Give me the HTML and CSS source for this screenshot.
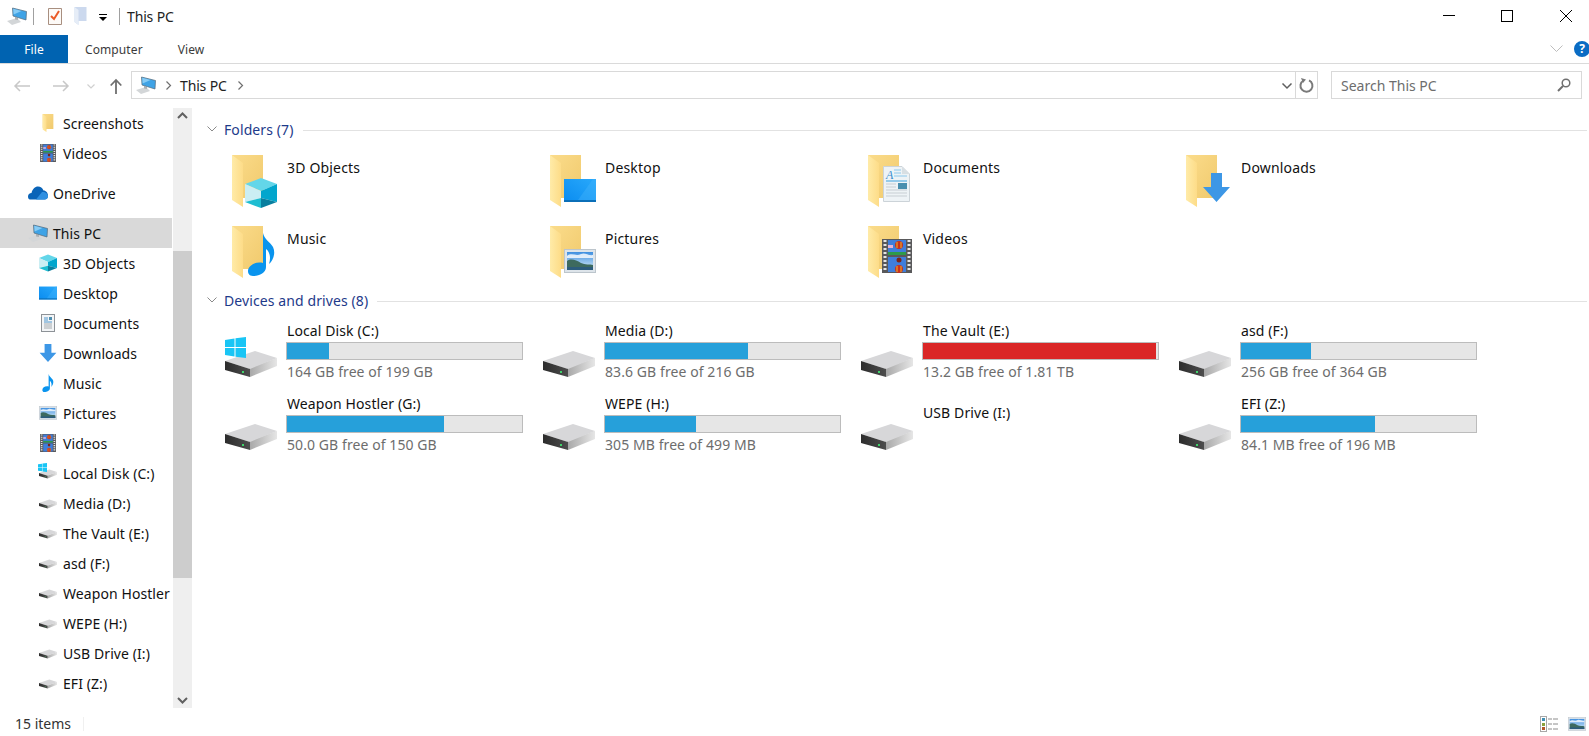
FILE: index.html
```html
<!DOCTYPE html>
<html lang="en">
<head>
<meta charset="utf-8">
<title>This PC</title>
<link rel="stylesheet" href="styles.css">
</head>
<body>
<svg class="defs" aria-hidden="true">
  <defs>
    <linearGradient id="gFlap" x1="0" y1="0" x2="1" y2="0"><stop offset="0" stop-color="#ffeba8"/><stop offset="1" stop-color="#fddc88"/></linearGradient>
    <linearGradient id="gBack" x1="0" y1="0" x2="1" y2="1"><stop offset="0" stop-color="#fbdc8b"/><stop offset="1" stop-color="#f0c96c"/></linearGradient>
    <linearGradient id="gDesk" x1="0" y1="1" x2="1" y2="0"><stop offset="0" stop-color="#0a8cf0"/><stop offset="1" stop-color="#29a9fb"/></linearGradient>
    <linearGradient id="gSky" x1="0" y1="0" x2="0" y2="1"><stop offset="0" stop-color="#3f8fe0"/><stop offset="1" stop-color="#d9edf7"/></linearGradient>
    <linearGradient id="gDrive" x1="0" y1="0" x2="1" y2="0"><stop offset="0" stop-color="#a6a6a6"/><stop offset="1" stop-color="#e6e6e6"/></linearGradient>
    <linearGradient id="gDark" x1="0" y1="0" x2="1" y2="0"><stop offset="0" stop-color="#2c2c2c"/><stop offset="1" stop-color="#4d4d4d"/></linearGradient>
    <symbol id="folder" viewBox="0 0 31 52">
      <path fill="url(#gBack)" d="M0 0H31V43H11V46L0 40Z"/>
      <path fill="#fff" d="M11 43H16V49L11 48Z"/>
      <path fill="url(#gFlap)" d="M0 0L11 8V52L0 45Z"/>
    </symbol>
    <symbol id="cube" viewBox="0 0 32 30">
      <path fill="#63d6e9" d="M0 6L16 0L32 6L16 13Z"/>
      <path fill="#cbeef3" d="M0 6L16 13V20L0 24Z"/>
      <path fill="#02a6cd" d="M32 6L16 13V20L32 24Z"/>
      <path fill="#1ebdd1" d="M0 24L16 20V30Z"/>
      <path fill="#097f9f" d="M32 24L16 20V30Z"/>
    </symbol>
    <symbol id="desk" viewBox="0 0 32 23">
      <rect width="32" height="23" fill="url(#gDesk)"/>
      <rect y="21" width="32" height="2" fill="#0b6fb8"/>
      <path fill="#4ab8fb" d="M14 21L29 0H32V21Z" opacity=".35"/>
    </symbol>
    <symbol id="doc" viewBox="0 0 27 36">
      <path fill="#eef3f6" stroke="#ccd3d8" d="M.5.5H19L26.5 8V35.5H.5Z"/>
      <path fill="#d8dfe3" d="M19 .5V8H26.5Z"/>
      <text class="docA" x="3" y="13">A</text>
      <path stroke="#8cc8ec" d="M11 4H18M11 7H18M11 10H24"/>
      <path stroke="#3da2de" d="M3 15H24"/>
      <rect x="15" y="17" width="9" height="6" fill="#4a8fae"/>
      <path stroke="#c7ced3" d="M3 18H13M3 21H13M3 24H24M3 27H24M3 30H24"/>
    </symbol>
    <symbol id="arrow" viewBox="0 0 27 29">
      <path fill="#3d97e6" d="M8 0H19V14H27L13.500 29L0 14H8Z"/>
    </symbol>
    <symbol id="note" viewBox="0 0 27 43">
      <path fill="#0a94ee" d="M15 0C16 6 22 9 25 14C28 20 25 28 21 31C23 25 22 19 18 16V34C18 40 11 43 5 43C1 43 0 40 0 38C0 33 7 28 15 30Z"/>
    </symbol>
    <symbol id="pic" viewBox="0 0 32 24">
      <rect x=".5" y=".5" width="31" height="23" fill="#dde4ea" stroke="#bcc5cc"/>
      <rect x="3" y="3" width="26" height="18" fill="url(#gSky)"/>
      <path fill="#fff" opacity=".8" d="M3 7C8 3 12 8 17 5C21 3 24 7 29 6V9H3Z"/>
      <path fill="#3d6a5e" d="M3 12C7 9 12 11 17 14C21 16 26 15 29 16V21H3Z"/>
      <path fill="#2c5c7c" d="M3 18H29V21H3Z"/>
    </symbol>
    <symbol id="film" viewBox="0 0 30 34">
      <rect width="30" height="34" fill="#59595b"/>
      <path stroke="#e5e5e5" stroke-width="3" stroke-dasharray="2 2" d="M3 1V33M27 1V33"/>
      <rect x="6" y="1" width="18" height="15" fill="#3f7edc"/>
      <rect x="6" y="18" width="18" height="15" fill="#3f7edc"/>
      <path fill="#2e9a4a" d="M6 13H24V16H6Z"/>
      <path fill="#e8b2d4" d="M6 6H11V9H6Z"/>
      <circle cx="17" cy="6" r="4" fill="#c8301e"/>
      <path stroke="#e9b82c" d="M15 3V9M19 3V9"/>
      <circle cx="17" cy="21" r="2.500" fill="#7a241a"/>
      <circle cx="17" cy="30" r="4" fill="#c8301e"/>
      <path stroke="#e9b82c" d="M15 27V33M19 27V33"/>
    </symbol>
    <symbol id="drive" viewBox="0 0 52 26">
      <path fill="url(#gDrive)" d="M24 17L52 7V15L25 26Z"/>
      <path fill="#d7d7d9" d="M0 10L30 0L52 7L25 18Z"/>
      <path fill="url(#gDark)" d="M0 10L25 18V26L0 19Z"/>
      <rect x="17" y="20" width="2" height="2" fill="#3fd36a"/>
    </symbol>
    <symbol id="win" viewBox="0 0 21 21">
      <path fill="#19c5f5" d="M0 3L9.500 1.500V10H0ZM10.500 1.300L21 0V10H10.500ZM0 11H9.500V19.500L0 18ZM10.500 11H21V21L10.500 19.700Z"/>
    </symbol>
    <symbol id="pc" viewBox="0 0 20 18">
      <path fill="#d3d6d8" d="M0 14L10 11L14 15L5 18Z"/>
      <path fill="#aeb2b5" d="M8 10L11 11V13L8 12.500Z"/>
      <path fill="#3fa3e6" stroke="#566a7a" stroke-width=".7" d="M5.500 1L19.500 4.500L19 13L6 9Z"/>
      <path fill="#86cbf5" d="M6.200 1.800L14.500 3.900L6.600 7.500Z"/>
    </symbol>
    <symbol id="sdoc" viewBox="0 0 14 18">
      <rect x=".5" y=".5" width="13" height="17" fill="#f3f5f7" stroke="#8d9297"/>
      <path stroke="#4f96cc" d="M3 4H7M3 6H7M3 8H11"/>
      <rect x="8" y="3" width="3" height="3" fill="#4f8fb0"/>
      <path stroke="#a5abaf" d="M3 10H11M3 12H11M3 14H11"/>
    </symbol>
  </defs>
</svg>

<div class="app">
  <header class="titlebar">
    <svg class="q-pc"><use href="#pc"/></svg>
    <span class="q-sep"></span>
    <svg class="q-check" viewBox="0 0 14 18"><path fill="#fdfaf7" stroke="#a88f80" d="M.5 1.500H13.500V17.500H.5Z"/><path fill="none" stroke="#ea5a26" stroke-width="2" d="M3 9L6 12L11 4"/></svg>
    <svg class="q-fold" viewBox="0 0 12 18"><path fill="#ccd9ee" d="M0 0H12V14H4V18L0 15Z"/><path fill="#e6edf7" d="M0 0L4 3V18L0 15Z"/></svg>
    <svg class="q-drop" viewBox="0 0 8 7"><path d="M0 0H8V1H0ZM0 3H8L4 7Z"/></svg>
    <span class="q-sep q-sep2"></span>
    <span class="win-title">This PC</span>
    <div class="win-ctl">
      <svg class="ctl" viewBox="0 0 12 12"><path stroke="#000" d="M0 5.500H12"/></svg>
      <svg class="ctl" viewBox="0 0 12 12"><rect x=".5" y=".5" width="11" height="11" fill="none" stroke="#000"/></svg>
      <svg class="ctl ctl-close" viewBox="0 0 12 12"><path stroke="#000" d="M0 0L12 12M12 0L0 12"/></svg>
    </div>
  </header>

  <nav class="tabs">
    <span class="tab-file">File</span>
    <span class="tab tab-c">Computer</span>
    <span class="tab tab-v">View</span>
    <svg class="rib-chev" viewBox="0 0 13 8"><path fill="none" stroke="#bdbdbd" d="M.5.500L6.500 6.500L12.500.500"/></svg>
    <span class="help">?</span>
  </nav>

  <div class="navbar">
    <svg class="nv nv-back" viewBox="0 0 16 12"><path fill="none" stroke="#c8c8c8" stroke-width="1.500" d="M16 6H1M6 1L1 6L6 11"/></svg>
    <svg class="nv nv-fwd" viewBox="0 0 16 12"><path fill="none" stroke="#c8c8c8" stroke-width="1.500" d="M0 6H15M10 1L15 6L10 11"/></svg>
    <svg class="nv-small" viewBox="0 0 8 5"><path fill="none" stroke="#d0d0d0" stroke-width="1.200" d="M.5.500L4 4L7.500.500"/></svg>
    <svg class="nv-up" viewBox="0 0 12 15"><path fill="none" stroke="#6f6f6f" stroke-width="1.800" d="M6 15V1M.7 6.500L6 1L11.300 6.500"/></svg>
    <div class="addr">
      <svg class="addr-pc"><use href="#pc"/></svg>
      <svg class="crumb-chev" viewBox="0 0 5 9"><path fill="none" stroke="#6f6f6f" stroke-width="1.200" d="M.5.500L4.500 4.500L.5 8.500"/></svg>
      <span class="crumb">This PC</span>
      <svg class="crumb-chev" viewBox="0 0 5 9"><path fill="none" stroke="#6f6f6f" stroke-width="1.200" d="M.5.500L4.500 4.500L.5 8.500"/></svg>
      <svg class="addr-drop" viewBox="0 0 10 6"><path fill="none" stroke="#5f5f5f" stroke-width="1.500" d="M.5.500L5 5L9.500.500"/></svg>
      <span class="addr-refresh">
        <svg viewBox="0 0 15 15" class="refresh"><path fill="none" stroke="#7a7a7a" stroke-width="2" d="M4.500 2.500A6 6 0 1 0 10 2.300"/><path fill="#7a7a7a" d="M2 0L7 1.500L4 5Z"/></svg>
      </span>
    </div>
    <div class="search">
      <span>Search This PC</span>
      <svg class="lens" viewBox="0 0 14 14"><circle cx="9" cy="5" r="3.800" fill="none" stroke="#6f6f6f" stroke-width="1.500"/><path stroke="#6f6f6f" stroke-width="2" d="M6 8L1 13"/></svg>
    </div>
  </div>

  <div class="main">
    <aside class="tree">
      <div class="row lv2"><svg class="ti"><use href="#folder" x="2" y="0" width="14" height="18"/></svg><span>Screenshots</span></div>
      <div class="row lv2"><svg class="ti"><use href="#film"/></svg><span>Videos</span></div>
      <div class="row lv1 gap"><svg class="ti ti-wide" viewBox="0 0 20 13"><path fill="#0a64b8" d="M2 13C.5 13 0 11.500 0 10C0 8 1.500 6.500 3.500 6.500C4.500 2.500 7 0 10 0C12.500 0 14.500 1.500 15.500 4C18 4 20 6.500 20 9C20 11.500 18.500 13 16.500 13Z"/><path fill="#2f8fe0" d="M8 13L14 5.500C17 5 20 7 20 10C20 12 18.500 13 16.500 13Z"/></svg><span>OneDrive</span></div>
      <div class="row lv1 gap sel"><svg class="ti ti-wide"><use href="#pc"/></svg><span>This PC</span></div>
      <div class="row lv2"><svg class="ti"><use href="#cube"/></svg><span>3D Objects</span></div>
      <div class="row lv2"><svg class="ti"><use href="#desk"/></svg><span>Desktop</span></div>
      <div class="row lv2"><svg class="ti"><use href="#sdoc"/></svg><span>Documents</span></div>
      <div class="row lv2"><svg class="ti"><use href="#arrow"/></svg><span>Downloads</span></div>
      <div class="row lv2"><svg class="ti"><use href="#note"/></svg><span>Music</span></div>
      <div class="row lv2"><svg class="ti"><use href="#pic"/></svg><span>Pictures</span></div>
      <div class="row lv2"><svg class="ti"><use href="#film"/></svg><span>Videos</span></div>
      <div class="row lv2"><svg class="ti"><use href="#drive" y="5" width="18" height="10"/><use href="#win" x="-1" y="-1" width="9" height="9"/></svg><span>Local Disk (C:)</span></div>
      <div class="row lv2"><svg class="ti"><use href="#drive" y="5" width="18" height="10"/></svg><span>Media (D:)</span></div>
      <div class="row lv2"><svg class="ti"><use href="#drive" y="5" width="18" height="10"/></svg><span>The Vault (E:)</span></div>
      <div class="row lv2"><svg class="ti"><use href="#drive" y="5" width="18" height="10"/></svg><span>asd (F:)</span></div>
      <div class="row lv2"><svg class="ti"><use href="#drive" y="5" width="18" height="10"/></svg><span>Weapon Hostler</span></div>
      <div class="row lv2"><svg class="ti"><use href="#drive" y="5" width="18" height="10"/></svg><span>WEPE (H:)</span></div>
      <div class="row lv2"><svg class="ti"><use href="#drive" y="5" width="18" height="10"/></svg><span>USB Drive (I:)</span></div>
      <div class="row lv2"><svg class="ti"><use href="#drive" y="5" width="18" height="10"/></svg><span>EFI (Z:)</span></div>
    </aside>

    <div class="scroll">
      <svg class="sb-btn" viewBox="0 0 19 16"><path fill="none" stroke="#606060" stroke-width="2" d="M5 10L9.500 5.500L14 10"/></svg>
      <div class="sb-thumb"></div>
      <svg class="sb-btn" viewBox="0 0 19 16"><path fill="none" stroke="#606060" stroke-width="2" d="M5 6L9.500 10.500L14 6"/></svg>
    </div>

    <section class="content">
      <div class="group-head">
        <svg class="g-chev" viewBox="0 0 10 6"><path fill="none" stroke="#8a8a8a" d="M.5.500L5 5L9.500.500"/></svg>
        <span class="g-title">Folders (7)</span>
        <span class="g-rule"></span>
      </div>
      <div class="folders">
        <div class="tile"><svg class="f-ic"><use href="#folder" x="4" y="2" width="31" height="52"/><use href="#cube" x="17" y="25" width="32" height="30"/></svg><span>3D Objects</span></div>
        <div class="tile"><svg class="f-ic"><use href="#folder" x="4" y="2" width="31" height="52"/><use href="#desk" x="18" y="26" width="32" height="23"/></svg><span>Desktop</span></div>
        <div class="tile"><svg class="f-ic"><use href="#folder" x="4" y="2" width="31" height="52"/><use href="#doc" x="19" y="13" width="27" height="36"/></svg><span>Documents</span></div>
        <div class="tile"><svg class="f-ic"><use href="#folder" x="4" y="2" width="31" height="52"/><use href="#arrow" x="21" y="20" width="27" height="29"/></svg><span>Downloads</span></div>
        <div class="tile"><svg class="f-ic"><use href="#folder" x="4" y="2" width="31" height="52"/><use href="#note" x="20" y="9" width="27" height="43"/></svg><span>Music</span></div>
        <div class="tile"><svg class="f-ic"><use href="#folder" x="4" y="2" width="31" height="52"/><use href="#pic" x="18" y="25" width="32" height="24"/></svg><span>Pictures</span></div>
        <div class="tile"><svg class="f-ic"><use href="#folder" x="4" y="2" width="31" height="52"/><use href="#film" x="18" y="15" width="30" height="34"/></svg><span>Videos</span></div>
      </div>

      <div class="group-head">
        <svg class="g-chev" viewBox="0 0 10 6"><path fill="none" stroke="#8a8a8a" d="M.5.500L5 5L9.500.500"/></svg>
        <span class="g-title">Devices and drives (8)</span>
        <span class="g-rule"></span>
      </div>
      <div class="drives">
        <div class="drive"><svg class="d-ic"><use href="#drive" y="30" width="52" height="26"/><use href="#win" y="16" width="21" height="21"/></svg><div class="d-info"><span class="d-name">Local Disk (C:)</span><div class="bar"><div class="fill" style="width:18%"></div></div><span class="d-free">164 GB free of 199 GB</span></div></div>
        <div class="drive"><svg class="d-ic"><use href="#drive" y="30" width="52" height="26"/></svg><div class="d-info"><span class="d-name">Media (D:)</span><div class="bar"><div class="fill" style="width:61%"></div></div><span class="d-free">83.6 GB free of 216 GB</span></div></div>
        <div class="drive"><svg class="d-ic"><use href="#drive" y="30" width="52" height="26"/></svg><div class="d-info"><span class="d-name">The Vault (E:)</span><div class="bar"><div class="fill full" style="width:99.200%"></div></div><span class="d-free">13.2 GB free of 1.81 TB</span></div></div>
        <div class="drive"><svg class="d-ic"><use href="#drive" y="30" width="52" height="26"/></svg><div class="d-info"><span class="d-name">asd (F:)</span><div class="bar"><div class="fill" style="width:29.700%"></div></div><span class="d-free">256 GB free of 364 GB</span></div></div>
        <div class="drive"><svg class="d-ic"><use href="#drive" y="30" width="52" height="26"/></svg><div class="d-info"><span class="d-name">Weapon Hostler (G:)</span><div class="bar"><div class="fill" style="width:66.700%"></div></div><span class="d-free">50.0 GB free of 150 GB</span></div></div>
        <div class="drive"><svg class="d-ic"><use href="#drive" y="30" width="52" height="26"/></svg><div class="d-info"><span class="d-name">WEPE (H:)</span><div class="bar"><div class="fill" style="width:38.900%"></div></div><span class="d-free">305 MB free of 499 MB</span></div></div>
        <div class="drive"><svg class="d-ic"><use href="#drive" y="30" width="52" height="26"/></svg><div class="d-info"><span class="d-name d-solo">USB Drive (I:)</span></div></div>
        <div class="drive"><svg class="d-ic"><use href="#drive" y="30" width="52" height="26"/></svg><div class="d-info"><span class="d-name">EFI (Z:)</span><div class="bar"><div class="fill" style="width:57.100%"></div></div><span class="d-free">84.1 MB free of 196 MB</span></div></div>
      </div>
    </section>
  </div>

  <footer class="status">
    <span class="count">15 items</span>
    <span class="st-sep"></span>
    <svg class="v-list" viewBox="0 0 18 16"><rect x=".5" y=".5" width="6" height="15" fill="#fff" stroke="#a8a8a8"/><rect x="2" y="2" width="3" height="3" fill="#3f8fb5"/><rect x="2" y="7" width="3" height="3" fill="#8aa23c"/><rect x="2" y="11" width="3" height="3" fill="#b5572a"/><path stroke="#8c8c8c" d="M8 3H12M13 3H18M8 8H12M13 8H18M8 13H12M13 13H18"/></svg>
    <svg class="v-large"><use href="#pic"/></svg>
  </footer>
</div>
</body>
</html>
```

FILE: styles.css
```css
* { box-sizing: border-box; }
html, body { margin: 0; padding: 0; background: #fff; }
body { font-family: "Noto Sans", "Open Sans", sans-serif; font-size: 14px; color: #000; overflow: hidden; }
svg { display: block; flex: none; overflow: visible; }
.defs { width: 0; height: 0; position: absolute; }
.docA { font: italic 12px "Liberation Serif", serif; fill: #3a8fd0; }

.app { width: 1589px; height: 736px; display: flex; flex-direction: column; overflow: hidden; }

/* title bar */
.titlebar { height: 35px; display: flex; align-items: center; flex: none; padding-bottom: 3px; }
.q-pc { width: 20px; height: 18px; margin-left: 7px; }
.q-sep { width: 1px; height: 17px; background: #a0a0a0; margin-left: 6px; }
.q-check { width: 14px; height: 18px; margin-left: 14px; }
.q-fold { width: 13px; height: 18px; margin-left: 12px; }
.q-drop { width: 8px; height: 7px; margin-left: 12px; margin-top: 3px; }
.q-sep2 { margin-left: 12px; }
.win-title { margin-left: 7px; letter-spacing: -.15px; color: #222; }
.win-ctl { margin-left: auto; display: flex; gap: 46px; padding-right: 17px; align-items: center; }
.ctl { width: 12px; height: 12px; }
.ctl-close { margin-left: 1px; }

/* ribbon tabs */
.tabs { height: 29px; flex: none; display: flex; align-items: center; border-bottom: 1px solid #dadada; font-size: 12px; color: #3b3b3b; letter-spacing: .1px; }
.tab-file { width: 68px; height: 28px; background: #0063b1; color: #fff; display: flex; align-items: center; justify-content: center; }
.tab-c { margin-left: 17px; }
.tab-v { margin-left: 35px; }
.rib-chev { width: 13px; height: 8px; margin-left: auto; margin-right: 11px; }
.help { width: 16px; height: 16px; border-radius: 50%; background: #0a6cc4; color: #fff; font-weight: 700; font-size: 12px; letter-spacing: 0; line-height: 16px; text-align: center; margin-right: -1px; flex: none; }

/* address row */
.navbar { height: 44px; flex: none; display: flex; align-items: flex-start; padding-top: 7px; }
.nv { width: 16px; height: 12px; margin-top: 9px; }
.nv-back { margin-left: 14px; }
.nv-fwd { margin-left: 23px; }
.nv-small { width: 8px; height: 5px; margin: 13px 0 0 18px; }
.nv-up { width: 12px; height: 15px; margin: 8px 0 0 15px; }
.addr { width: 1187px; height: 28px; margin-left: 9px; border: 1px solid #d9d9d9; display: flex; align-items: center; }
.addr-pc { width: 20px; height: 18px; margin-left: 4px; }
.crumb-chev { width: 5px; height: 9px; margin-left: 10px; }
.crumb { margin-left: 9px; letter-spacing: -.15px; color: #222; }
.crumb + .crumb-chev { margin-left: 11px; }
.addr-drop { width: 10px; height: 6px; margin-left: auto; margin-right: 3px; margin-top: 2px; }
.addr-refresh { width: 22px; height: 26px; border-left: 1px solid #d9d9d9; display: flex; align-items: center; justify-content: center; }
.refresh { width: 15px; height: 15px; }
.search { width: 251px; height: 28px; margin-left: 13px; border: 1px solid #d9d9d9; display: flex; align-items: center; justify-content: space-between; padding: 0 10px 0 9px; color: #6d6d6d; }
.lens { width: 14px; height: 14px; }

/* main */
.main { height: 600px; flex: none; display: flex; }
.tree { width: 173px; flex: none; overflow: hidden; letter-spacing: .08px; }
.row { height: 30px; display: flex; align-items: center; white-space: nowrap; overflow: hidden; color: #111; }
.lv2 { padding-left: 39px; }
.lv2 .ti { margin-right: 6px; }
.lv1 { padding-left: 28px; }
.lv1 .ti { margin-right: 5px; }
.gap { margin-top: 10px; }
.sel { background: #d9d9d9; margin-right: 1px; }
.ti { width: 18px; height: 18px; }
.ti-wide { width: 20px; height: 18px; }

.scroll { width: 19px; flex: none; background: #efefef; display: flex; flex-direction: column; }
.sb-btn { width: 19px; height: 16px; margin: 0; }
.sb-thumb { height: 327px; margin-top: 127px; background: #cdcdcd; margin-bottom: auto; }

.content { flex: 1; min-width: 0; padding: 11px 2px 0 0; }
.group-head { height: 20px; display: flex; align-items: center; padding-left: 15px; }
.g-chev { width: 10px; height: 6px; }
.g-title { margin-left: 7px; color: #1e3a8a; letter-spacing: .1px; }
.g-rule { flex: 1; height: 1px; background: #e2e2e2; margin-left: 9px; margin-top: 2px; }

.folders { display: grid; grid-template-columns: repeat(4, 318px); grid-auto-rows: 66px; row-gap: 5px; padding: 14px 0 0 36px; }
.tile { display: flex; align-items: flex-start; }
.tile span { margin-top: 5px; line-height: 20px; color: #111; letter-spacing: .18px; }
.f-ic { width: 59px; height: 60px; }

.drives { display: grid; grid-template-columns: repeat(4, 318px); grid-auto-rows: 70px; row-gap: 3px; padding: 11px 0 0 33px; }
.drive { display: flex; align-items: flex-start; }
.d-ic { width: 61px; height: 60px; }
.d-info { width: 237px; }
.d-name { display: block; height: 21px; line-height: 20px; padding-left: 1px; color: #111; letter-spacing: .1px; }
.d-solo { margin-top: 9px; }
.bar { height: 18px; border: 1px solid #bcbcbc; background: #e6e6e6; }
.fill { height: 100%; background: #26a0da; }
.full { background: #da2626; }
.d-free { display: block; padding-left: 1px; line-height: 24px; color: #6d6d6d; letter-spacing: .08px; }

/* status */
.status { height: 28px; flex: none; display: flex; align-items: center; padding-top: 3px; }
.count { margin-left: 15px; color: #333; }
.st-sep { width: 1px; height: 14px; background: #f0f0f0; margin-left: 12px; }
.v-list { width: 18px; height: 16px; margin-left: auto; }
.v-large { width: 18px; height: 14px; margin: 0 3px 0 10px; }
```
